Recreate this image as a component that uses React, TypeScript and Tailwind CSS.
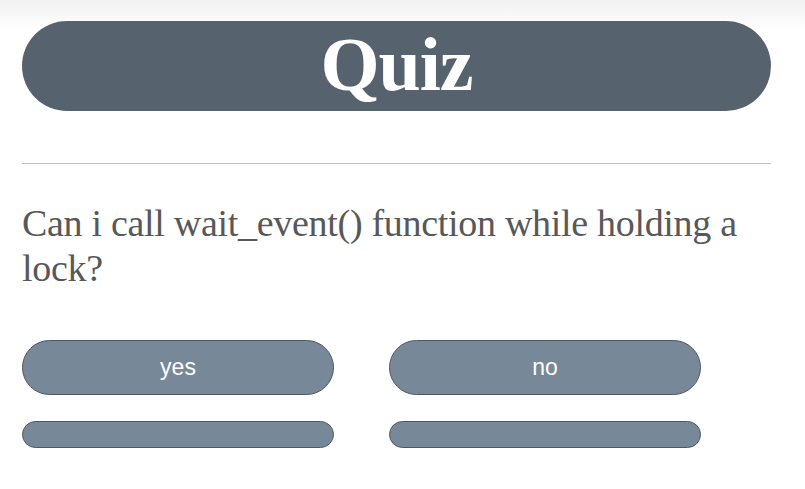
import React from 'react';

const answers = ['yes', 'no', '', ''];

export default function App() {
  return (
    <div className="min-h-[489px] w-[805px] bg-gradient-to-b from-[#f1f1f1] via-white to-white bg-no-repeat [background-size:100%_60px] bg-white pt-[21px] px-[22px]">
      <header className="w-[749px] h-[90px] rounded-full bg-[#56626d] flex items-center justify-center">
        <h1 className="text-white font-bold text-[76px] leading-none pb-[4px] [font-family:'Liberation_Serif',serif] tracking-[-1px]">
          Quiz
        </h1>
      </header>

      <hr className="mt-[52px] w-[749px] border-t border-[#c2c2c2]" />

      <p className="mt-[37px] w-[749px] text-[#585858] text-[38px] leading-[45px] [font-family:'Liberation_Serif',serif] tracking-[-0.3px]">
        Can i call wait_event() function while holding a lock?
      </p>

      <div className="mt-[49px] grid grid-cols-[312px_312px] gap-x-[55px] gap-y-[26px]">
        {answers.map((a, i) => (
          <button
            key={i}
            className={`rounded-full bg-[#778899] border border-[#4d5866] text-white text-[23px] [font-family:'Liberation_Sans',sans-serif] flex items-center justify-center ${
              i < 2 ? 'h-[55px]' : 'h-[27px]'
            }`}
          >
            {a}
          </button>
        ))}
      </div>
    </div>
  );
}
